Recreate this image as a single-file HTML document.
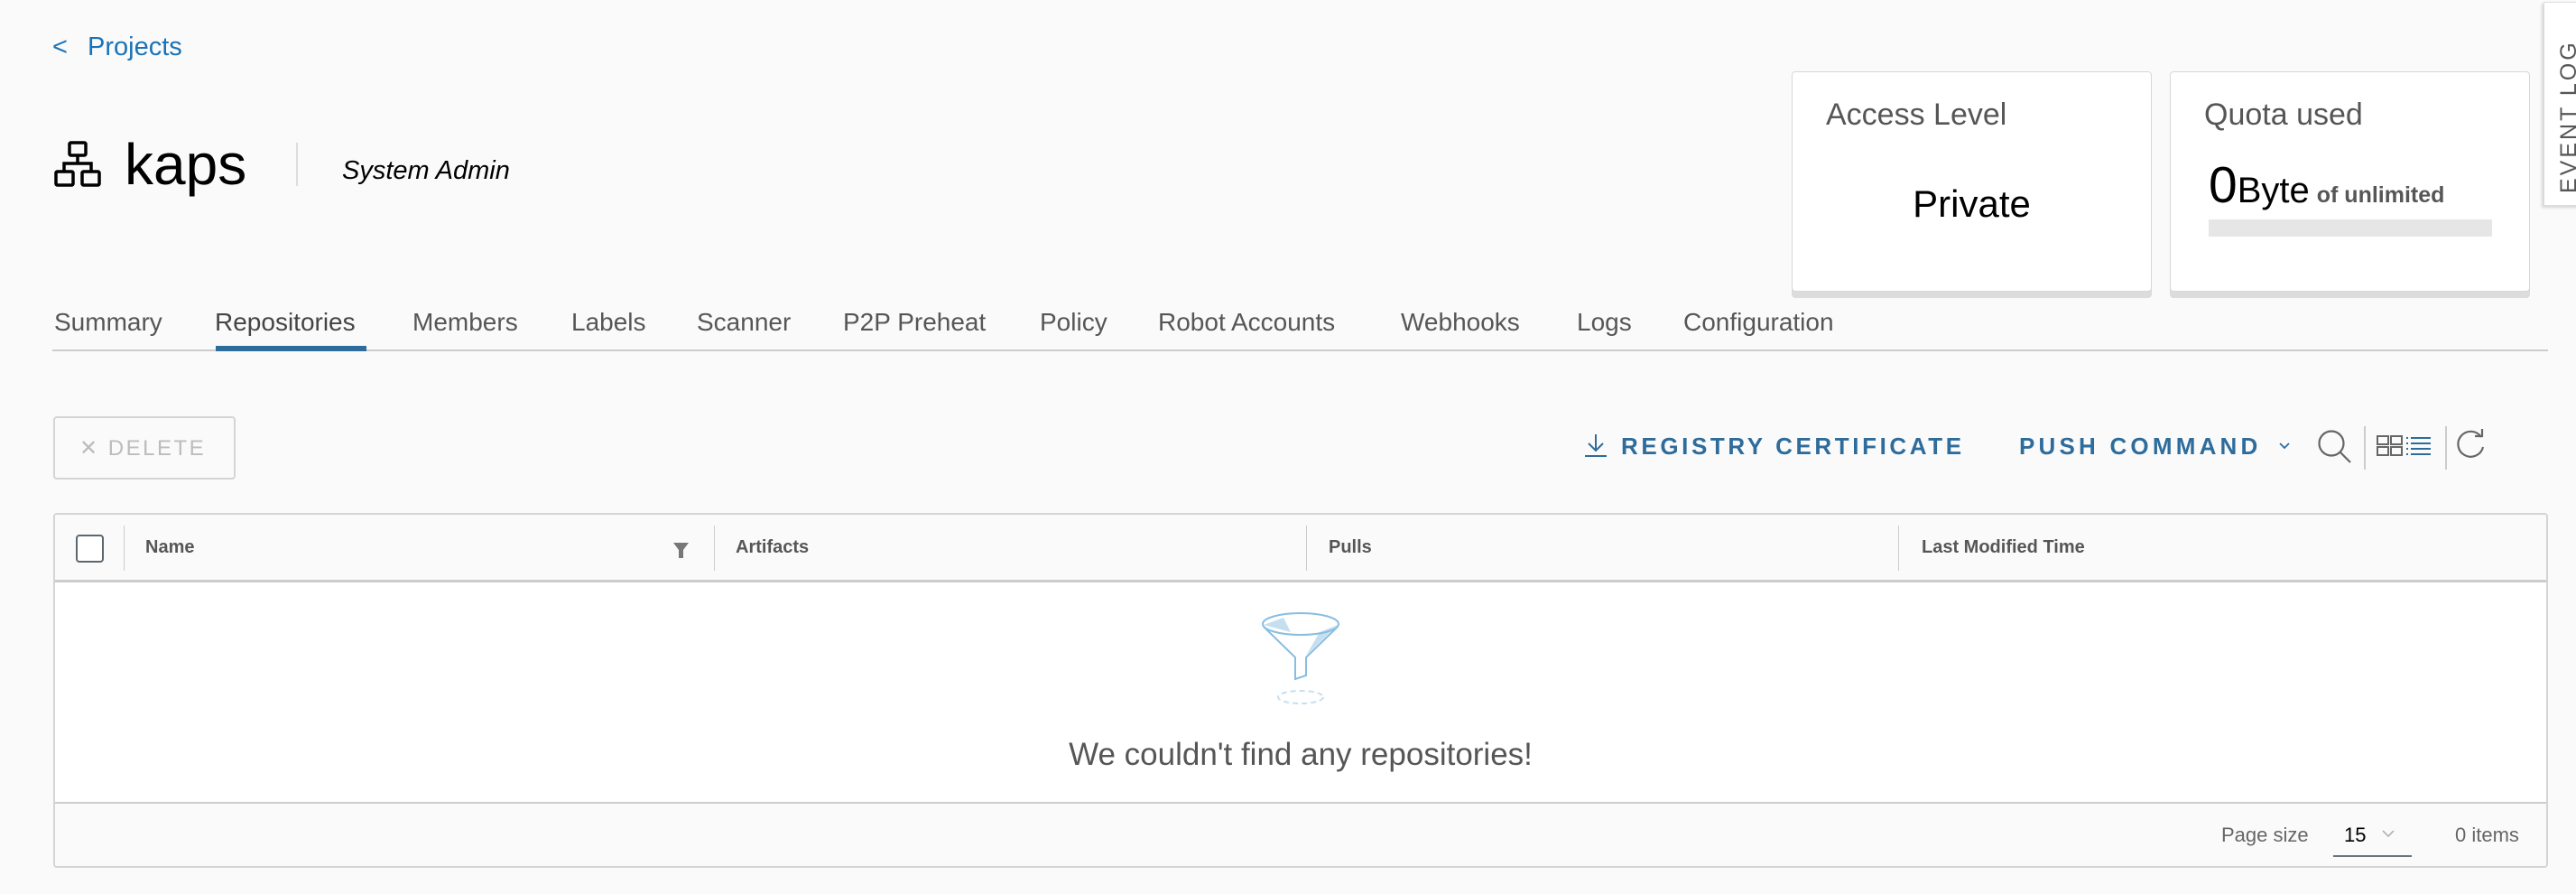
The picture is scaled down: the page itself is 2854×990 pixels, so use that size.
<!DOCTYPE html>
<html><head><meta charset="utf-8"><style>
*{margin:0;padding:0;box-sizing:border-box}
body{width:2854px;height:990px;background:#fafafa;font-family:"Liberation Sans",sans-serif;position:relative;overflow:hidden;color:#000}
.a{position:absolute;line-height:1;white-space:nowrap}
.tab{position:absolute;top:343px;font-size:28px;color:#565656;line-height:1}
.card{position:absolute;top:79px;width:399px;height:244px;background:#fff;border:1px solid #d7d7d7;border-radius:4px;box-shadow:0 7px 0 #dcdcdc}
.hd{position:absolute;top:596px;font-size:20px;font-weight:bold;color:#565656;line-height:1}
.vs{position:absolute;top:582px;width:1px;height:50px;background:#ccc}
</style></head><body>
<div class="a" style="left:58px;top:38px;font-size:29px;color:#1a73b8">&lt;</div>
<div class="a" style="left:97px;top:38px;font-size:29px;color:#1a73b8">Projects</div>

<svg class="a" style="left:60px;top:156px" width="56" height="52" viewBox="0 0 56 52" fill="none" stroke="#000" stroke-width="3.5">
<rect x="17" y="2" width="18" height="14" rx="1.5"/><line x1="26" y1="16" x2="26" y2="25"/><path d="M11 34V25H41V34"/>
<rect x="2" y="34" width="19" height="15" rx="1.5"/><rect x="31" y="34" width="19" height="15" rx="1.5"/></svg>
<div class="a" style="left:138px;top:150px;font-size:64px;color:#000">kaps</div>
<div class="a" style="left:328px;top:158px;width:2px;height:48px;background:#ddd"></div>
<div class="a" style="left:379px;top:175px;font-size:29px;font-style:italic;color:#000">System Admin</div>

<div class="tab" style="left:60px">Summary</div>
<div class="tab" style="left:238px;color:#454545">Repositories</div>
<div class="tab" style="left:457px">Members</div>
<div class="tab" style="left:633px">Labels</div>
<div class="tab" style="left:772px">Scanner</div>
<div class="tab" style="left:934px">P2P Preheat</div>
<div class="tab" style="left:1152px">Policy</div>
<div class="tab" style="left:1283px">Robot Accounts</div>
<div class="tab" style="left:1552px">Webhooks</div>
<div class="tab" style="left:1747px">Logs</div>
<div class="tab" style="left:1865px">Configuration</div>
<div class="a" style="left:58px;top:387px;width:2765px;height:2px;background:#ccc"></div>
<div class="a" style="left:239px;top:383px;width:167px;height:6px;background:#2e6c9c"></div>

<div class="card" style="left:1985px">
<div class="a" style="left:37px;top:30px;font-size:34px;color:#565656">Access Level</div>
<div class="a" style="left:0;width:397px;text-align:center;top:125px;font-size:42px;color:#000">Private</div>
</div>
<div class="card" style="left:2404px">
<div class="a" style="left:37px;top:30px;font-size:34px;color:#565656">Quota used</div>
<div class="a" style="left:42px;top:100px;height:50px;display:flex;align-items:baseline">
<span style="font-size:57px;line-height:50px">0</span><span style="font-size:40px;line-height:50px">Byte</span><span style="font-size:25px;font-weight:bold;color:#565656;margin-left:8px;line-height:50px">of unlimited</span></div>
<div class="a" style="left:42px;top:163px;width:314px;height:19px;background:#e6e6e6"></div>
</div>

<div class="a" style="left:2818px;top:2px;width:40px;height:226px;background:#fff;border:1px solid #ddd;box-shadow:-2px 2px 3px rgba(0,0,0,.15)"></div>
<div class="a" style="left:2834px;top:214px;transform:rotate(-90deg);transform-origin:0 0;font-size:25px;letter-spacing:3px;color:#565656">EVENT LOG</div>

<div class="a" style="left:59px;top:461px;width:202px;height:70px;border:2px solid #d4d4d4;border-radius:4px"></div>
<div class="a" style="left:88px;top:485px;font-size:24px;color:#bcbcbc;letter-spacing:2.5px">✕ DELETE</div>

<svg class="a" style="left:1754px;top:479px" width="28" height="28" viewBox="0 0 28 28" fill="none" stroke="#2e6c9c" stroke-width="2"><path d="M14 2V20M6 12L14 20L22 12M2 26H26"/></svg>
<div class="a" style="left:1796px;top:481px;font-size:26px;font-weight:bold;color:#2e6c9c;letter-spacing:3.6px">REGISTRY CERTIFICATE</div>
<div class="a" style="left:2237px;top:481px;font-size:26px;font-weight:bold;color:#2e6c9c;letter-spacing:4.2px">PUSH COMMAND</div>
<svg class="a" style="left:2524px;top:489px" width="14" height="10" viewBox="0 0 14 10" fill="none" stroke="#2e6c9c" stroke-width="1.8"><path d="M2 2L7 7L12 2"/></svg>
<svg class="a" style="left:2566px;top:476px" width="42" height="38" viewBox="0 0 42 38" fill="none" stroke="#666" stroke-width="2.2"><circle cx="17" cy="15" r="13.5"/><path d="M27 25L38 36"/></svg>
<div class="a" style="left:2619px;top:472px;width:2px;height:48px;background:#ccc"></div>
<svg class="a" style="left:2633px;top:482px" width="62" height="24" viewBox="0 0 62 24" fill="none" stroke-width="2"><g stroke="#666"><rect x="1" y="1" width="12" height="9"/><rect x="16" y="1" width="12" height="9"/><rect x="1" y="13" width="12" height="9"/><rect x="16" y="13" width="12" height="9"/></g><g stroke="#2e6c9c"><path d="M33 3h2M38 3h22M33 9h2M38 9h22M33 15h2M38 15h22M33 21h2M38 21h22"/></g></svg>
<div class="a" style="left:2709px;top:472px;width:2px;height:48px;background:#ccc"></div>
<svg class="a" style="left:2720px;top:475px" width="36" height="34" viewBox="0 0 36 34" fill="none" stroke="#666" stroke-width="2.2"><path d="M29 9A14 14 0 1 0 31 20"/><path d="M22 8H30V0"/></svg>

<div class="a" style="left:59px;top:568px;width:2764px;height:393px;background:#fff;border:2px solid #d4d4d4;border-radius:4px;overflow:hidden">
<div class="a" style="left:0;top:0;width:100%;height:75px;background:#fafafa;border-bottom:3px solid #ccc"></div>
<div class="a" style="left:0;top:318px;width:100%;height:75px;background:#fafafa;border-top:2px solid #ccc"></div>
</div>
<div class="a" style="left:84px;top:592px;width:31px;height:31px;border:2px solid #5b6770;border-radius:4px;background:#fff"></div>
<div class="vs" style="left:137px"></div>
<div class="hd" style="left:161px">Name</div>
<svg class="a" style="left:746px;top:601px" width="17" height="17" viewBox="0 0 17 17"><path d="M0 0H17L11 8V17H6V8Z" fill="#777"/></svg>
<div class="vs" style="left:791px"></div>
<div class="hd" style="left:815px">Artifacts</div>
<div class="vs" style="left:1447px"></div>
<div class="hd" style="left:1472px">Pulls</div>
<div class="vs" style="left:2103px"></div>
<div class="hd" style="left:2129px">Last Modified Time</div>

<svg class="a" style="left:1394px;top:674px" width="96" height="112" viewBox="1394 674 96 112" fill="none" stroke="#89bde0" stroke-width="2">
<path d="M1422 684L1430 700L1400 692Z" fill="#c6dff0" stroke="none"/>
<path d="M1462 700L1482 692L1447 726Z" fill="#c6dff0" stroke="none"/>
<ellipse cx="1441" cy="691" rx="42" ry="12"/>
<path d="M1400 694L1435 728V752L1447 748V728L1482 694"/>
<ellipse cx="1441" cy="772" rx="25" ry="7" stroke="#c6dff0" stroke-dasharray="6 4"/>
</svg>
<div class="a" style="left:0;width:2882px;text-align:center;top:818px;font-size:35px;color:#565656">We couldn't find any repositories!</div>

<div class="a" style="left:2461px;top:914px;font-size:22px;color:#666">Page size</div>
<div class="a" style="left:2597px;top:914px;font-size:22px;color:#000">15</div>
<svg class="a" style="left:2638px;top:918px" width="16" height="10" viewBox="0 0 16 10" fill="none" stroke="#aaa" stroke-width="1.5"><path d="M2 2L8 8L14 2"/></svg>
<div class="a" style="left:2585px;top:947px;width:87px;height:2px;background:#6b747c"></div>
<div class="a" style="left:2720px;top:914px;font-size:22px;color:#666">0 items</div>
</body></html>
